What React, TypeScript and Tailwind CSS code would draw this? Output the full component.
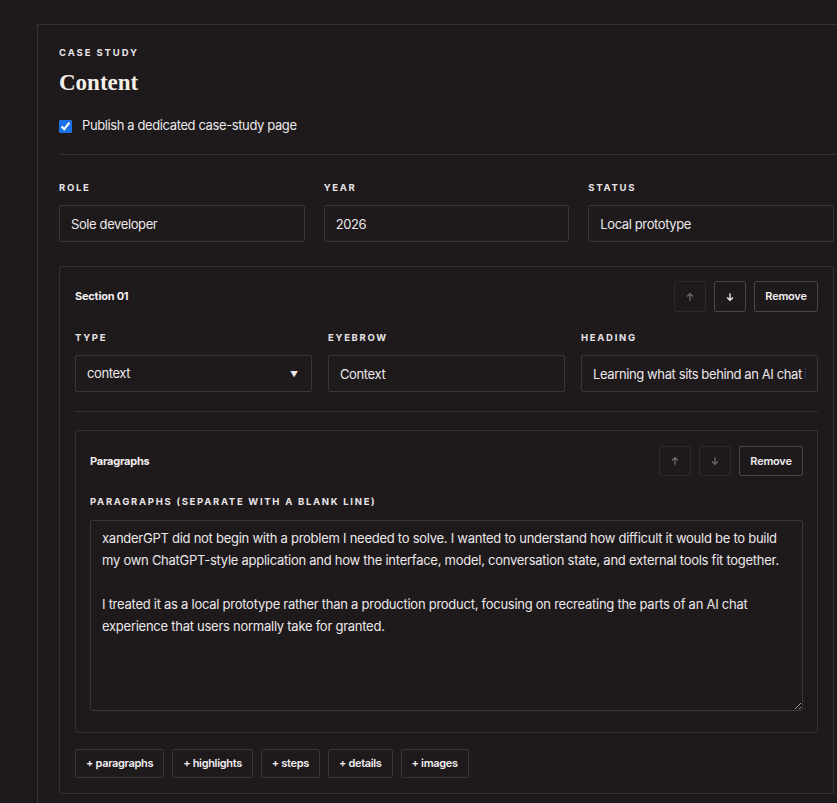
import React from 'react';

const sans = { fontFamily: 'Inter, "Noto Sans", sans-serif' };

const labelCls = 'block text-[9.5px] font-bold uppercase tracking-[0.18em] leading-[14px] text-[#e9e4e6]';
const fieldCls =
  'w-full h-[37px] rounded-[2px] border border-[#3a3537] bg-[#1e1a1c] px-[11px] text-[13px] tracking-[-0.03em] text-[#ece8ea] outline-none';

const ArrowUp = () => (
  <svg viewBox="0 0 12 12" className="w-[10px] h-[10px]" fill="none" stroke="currentColor" strokeWidth={1.6}>
    <path d="M6 10.5V2M2.5 5.5 6 2l3.5 3.5" />
  </svg>
);
const ArrowDown = () => (
  <svg viewBox="0 0 12 12" className="w-[10px] h-[10px]" fill="none" stroke="currentColor" strokeWidth={1.6}>
    <path d="M6 1.5V10M2.5 6.5 6 10l3.5-3.5" />
  </svg>
);

interface ControlsProps {
  h: string;
  downEnabled?: boolean;
}

const Controls: React.FC<ControlsProps> = ({ h, downEnabled }) => (
  <div className="flex items-center gap-2">
    <button className={`${h} w-[32px] flex items-center justify-center rounded-[2px] border border-[#2e2a2c] text-[#6d6769]`}>
      <ArrowUp />
    </button>
    <button
      className={`${h} w-[32px] flex items-center justify-center rounded-[2px] border ${
        downEnabled ? 'border-[#4a4547] text-[#f2eef0]' : 'border-[#2e2a2c] text-[#6d6769]'
      }`}
    >
      <ArrowDown />
    </button>
    <button
      className={`${h} w-[64px] rounded-[2px] border border-[#4a4547] text-[11px] font-semibold tracking-[-0.02em] text-[#f2eef0]`}
    >
      Remove
    </button>
  </div>
);

const paragraphs =
  'xanderGPT did not begin with a problem I needed to solve. I wanted to understand how difficult it would be to build my own ChatGPT-style application and how the interface, model, conversation state, and external tools fit together.\n\nI treated it as a local prototype rather than a production product, focusing on recreating the parts of an AI chat experience that users normally take for granted.';

export default function App() {
  return (
    <div className="min-h-[803px] w-full overflow-hidden bg-[#1e1a1c] pl-[37px] pt-[24px]" style={sans}>
      <div className="w-[819px] border-l border-t border-[#353032] pl-[21px] pr-[22px] pt-[21px] pb-[10px]">
        <div className="text-[9.5px] font-bold uppercase tracking-[0.2em] leading-[14px] text-[#e9e4e6]">Case study</div>
        <h2
          className="mt-[8px] text-[23px] font-bold leading-[30px] text-[#f3efe6]"
          style={{ fontFamily: '"Liberation Serif", "DejaVu Serif", serif' }}
        >
          Content
        </h2>
        <label className="mt-[18px] flex h-[20px] items-center gap-[10px] text-[13px] tracking-[-0.03em] text-[#ece8ea]">
          <input type="checkbox" defaultChecked className="h-[13px] w-[13px] accent-[#1a73e8]" />
          Publish a dedicated case-study page
        </label>
        <div className="mt-[18px] -mr-[22px] border-t border-[#353032]" />

        <div className="mt-[26px] grid w-[775px] grid-cols-3 gap-x-[19px]">
          {[
            ['Role', 'Sole developer'],
            ['Year', '2026'],
            ['Status', 'Local prototype'],
          ].map(([l, v]) => (
            <div key={l}>
              <span className={labelCls}>{l}</span>
              <input className={`${fieldCls} mt-[10px]`} defaultValue={v} />
            </div>
          ))}
        </div>

        <div className="mt-[24px] w-[775px] rounded-[2px] border border-[#353032] px-[15px] pt-[14px] pb-[15px]">
          <div className="flex items-center justify-between">
            <span className="text-[11px] font-bold tracking-[-0.02em] text-[#f2eef0]">Section 01</span>
            <Controls h="h-[31px]" downEnabled />
          </div>

          <div className="mt-[19px] grid grid-cols-3 gap-x-[16px]">
            <div>
              <span className={labelCls}>Type</span>
              <div className="relative mt-[10px]">
                <select className={`${fieldCls} appearance-none`} defaultValue="context">
                  <option value="context">context</option>
                </select>
                <span className="pointer-events-none absolute right-[14px] top-1/2 -translate-y-1/2 text-[8px] text-[#ece8ea]">
                  ▼
                </span>
              </div>
            </div>
            <div>
              <span className={labelCls}>Eyebrow</span>
              <input className={`${fieldCls} mt-[10px]`} defaultValue="Context" />
            </div>
            <div>
              <span className={labelCls}>Heading</span>
              <input
                className={`${fieldCls} mt-[10px]`}
                defaultValue="Learning what sits behind an AI chat interface"
              />
            </div>
          </div>

          <div className="mt-[19px] border-t border-[#353032]" />

          <div className="mt-[18px] rounded-[2px] border border-[#353032] px-[14px] pt-[15px] pb-[21px]">
            <div className="flex items-center justify-between">
              <span className="text-[11px] font-bold tracking-[-0.02em] text-[#f2eef0]">Paragraphs</span>
              <Controls h="h-[30px]" />
            </div>
            <span className={`${labelCls} mt-[19px]`}>Paragraphs (separate with a blank line)</span>
            <textarea
              className="mt-[11px] block h-[191px] w-full rounded-[2px] border border-[#3a3537] bg-[#1e1a1c] px-[11px] py-[6px] text-[13px] leading-[22px] tracking-[-0.02em] text-[#ece8ea] outline-none"
              defaultValue={paragraphs}
            />
          </div>

          <div className="mt-[16px] flex gap-2">
            {['+ paragraphs', '+ highlights', '+ steps', '+ details', '+ images'].map((t) => (
              <button
                key={t}
                className="h-[29px] rounded-[2px] border border-[#3a3537] px-[10px] text-[11px] font-semibold tracking-[-0.03em] text-[#f2eef0]"
              >
                {t}
              </button>
            ))}
          </div>
        </div>
      </div>
    </div>
  );
}
